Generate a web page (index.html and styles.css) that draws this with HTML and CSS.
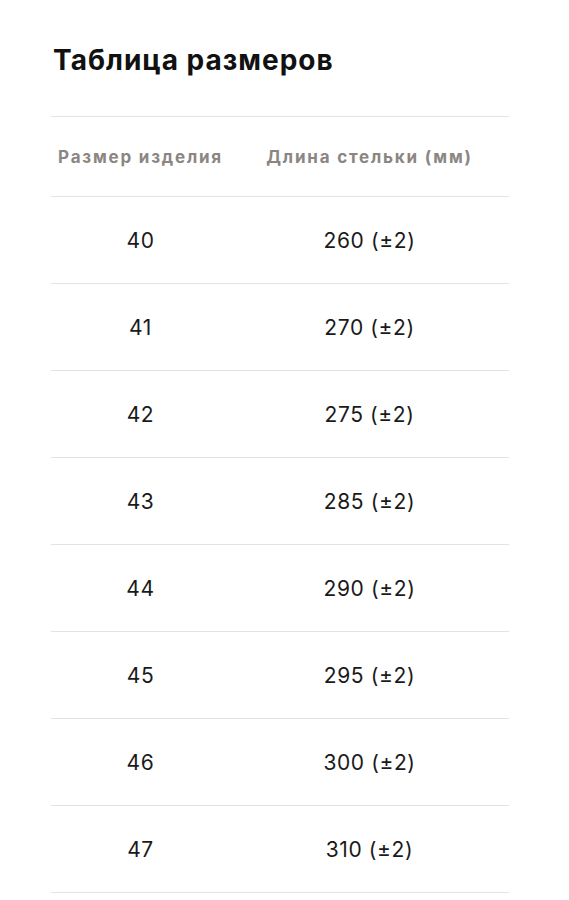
FILE: index.html
```html
<!DOCTYPE html>
<html lang="ru">
<head>
<meta charset="utf-8">
<link rel="stylesheet" href="styles.css">
</head>
<body>
<div class="page">
  <h1 class="title">Таблица размеров</h1>
  <table class="sizes">
    <thead>
      <tr><th class="c1">Размер изделия</th><th class="c2">Длина стельки (мм)</th></tr>
    </thead>
    <tbody>
      <tr><td>40</td><td>260 (±2)</td></tr>
      <tr><td>41</td><td>270 (±2)</td></tr>
      <tr><td>42</td><td>275 (±2)</td></tr>
      <tr><td>43</td><td>285 (±2)</td></tr>
      <tr><td>44</td><td>290 (±2)</td></tr>
      <tr><td>45</td><td>295 (±2)</td></tr>
      <tr><td>46</td><td>300 (±2)</td></tr>
      <tr><td>47</td><td>310 (±2)</td></tr>
    </tbody>
  </table>
</div>
</body>
</html>
```
FILE: styles.css
```css
html, body {
  margin: 0;
  background: #ffffff;
}
.page {
  padding: 0 0 0 51px;
  width: 458px;
  font-family: Inter, "Open Sans", sans-serif;
  color: #1a1a1a;
}
.title {
  margin: 0;
  padding: 40px 0 0 2px;
  height: 116px;
  box-sizing: border-box;
  font-size: 28px;
  font-weight: 700;
  line-height: 40px;
  letter-spacing: 1px;
  color: #111;
}
.sizes {
  width: 458px;
  border-collapse: collapse;
  border-top: 1px solid #e2e2e2;
}
.sizes th {
  height: 79px;
  padding: 0;
  font-size: 17px;
  font-weight: 700;
  letter-spacing: 1.8px;
  color: #8b8682;
  text-align: center;
  border-bottom: 1px solid #e2e2e2;
}
.sizes .c1 { width: 179px; }
.sizes td {
  height: 86px;
  padding: 0;
  font-size: 21px;
  font-weight: 400;
  letter-spacing: 0.6px;
  color: #1a1a1a;
  text-align: center;
  border-bottom: 1px solid #e2e2e2;
}
```
